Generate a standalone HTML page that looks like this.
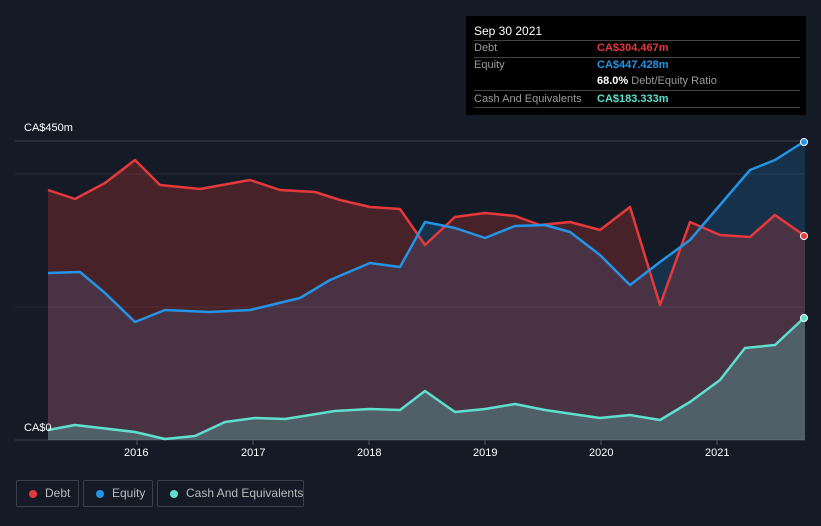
<!DOCTYPE html>
<html><head><style>
body{margin:0;width:821px;height:526px;background:#151b26;font-family:"Liberation Sans",sans-serif;overflow:hidden;position:relative}
.tt{position:absolute;left:466px;top:16px;width:340px;height:99px;background:#000;color:#fff;font-size:11px}
.row{position:absolute;left:8px;width:326px;border-top:1px solid #444}
.lab{position:absolute;left:8px;color:#999}
.val{position:absolute;left:131px;font-weight:bold;white-space:nowrap}
.lg{position:absolute;top:480px;height:27px;border:1px solid #3a404c;border-radius:2px;color:#bbb;font-size:12px;line-height:25px;box-sizing:border-box;white-space:nowrap}
.dot{position:absolute;left:12px;top:9px;width:8px;height:8px;border-radius:50%}
.ax{position:absolute;color:#fff;font-size:11px}
</style></head><body>
<svg width="821" height="526" style="position:absolute;left:0;top:0">
<line x1="15" y1="141" x2="805" y2="141" stroke="#3a404c"/>
<line x1="15" y1="174" x2="805" y2="174" stroke="#262c38"/>
<line x1="15" y1="307" x2="805" y2="307" stroke="#262c38"/>
<line x1="15" y1="440" x2="805" y2="440" stroke="#3a404c"/>
<line x1="137" y1="440" x2="137" y2="445" stroke="#555"/><line x1="253" y1="440" x2="253" y2="445" stroke="#555"/><line x1="369" y1="440" x2="369" y2="445" stroke="#555"/><line x1="485" y1="440" x2="485" y2="445" stroke="#555"/><line x1="601" y1="440" x2="601" y2="445" stroke="#555"/><line x1="717" y1="440" x2="717" y2="445" stroke="#555"/>
<polygon fill="rgba(33,150,243,0.18)" points="48,440 48,273 80,272 105,293 135,322 165,310 210,312 250,310 300,298 330,280 370,263 400,267 425,222 455,228 485,238 515,226 545,225 570,232 600,255 630,285 660,262 690,240 720,205 750,170 775,160 805,141 805,440"/>
<polygon fill="rgba(229,57,53,0.25)" points="48,440 48,190 75,199 105,183 135,160 160,185 200,189 250,180 280,190 315,192 340,200 370,207 400,209 425,245 455,217 485,213 515,216 540,225 570,222 600,230 630,207 660,305 690,222 720,235 750,237 775,215 805,236 805,440"/>
<polygon fill="rgba(100,230,210,0.25)" points="48,440 48,430 75,425 135,432 165,439 195,436 225,422 255,418 285,419 335,411 370,409 400,410 425,391 455,412 485,409 515,404 545,410 600,418 630,415 660,420 690,402 720,380 745,348 775,345 805,317 805,440"/>
<polyline fill="none" stroke="#e5393c" stroke-width="2.5" stroke-linejoin="round" points="48,190 75,199 105,183 135,160 160,185 200,189 250,180 280,190 315,192 340,200 370,207 400,209 425,245 455,217 485,213 515,216 540,225 570,222 600,230 630,207 660,305 690,222 720,235 750,237 775,215 805,236"/>
<polyline fill="none" stroke="#2394e6" stroke-width="2.5" stroke-linejoin="round" points="48,273 80,272 105,293 135,322 165,310 210,312 250,310 300,298 330,280 370,263 400,267 425,222 455,228 485,238 515,226 545,225 570,232 600,255 630,285 660,262 690,240 720,205 750,170 775,160 805,141"/>
<polyline fill="none" stroke="#5fe0cc" stroke-width="2.5" stroke-linejoin="round" points="48,430 75,425 135,432 165,439 195,436 225,422 255,418 285,419 335,411 370,409 400,410 425,391 455,412 485,409 515,404 545,410 600,418 630,415 660,420 690,402 720,380 745,348 775,345 805,317"/>
<circle cx="804" cy="236" r="3.5" fill="#e5393c" stroke="#fff"/>
<circle cx="804" cy="142" r="3.5" fill="#2394e6" stroke="#fff"/>
<circle cx="804" cy="318" r="3.5" fill="#5fe0cc" stroke="#fff"/>
</svg>
<div class="ax" style="left:24px;top:122px">CA$450m</div>
<div class="ax" style="left:24px;top:422px">CA$0</div>
<div class="ax" style="left:124px;top:447px">2016</div><div class="ax" style="left:241px;top:447px">2017</div><div class="ax" style="left:357px;top:447px">2018</div><div class="ax" style="left:473px;top:447px">2019</div><div class="ax" style="left:589px;top:447px">2020</div><div class="ax" style="left:705px;top:447px">2021</div>
<div class="tt">
<div style="position:absolute;left:8px;top:8px;font-size:12px">Sep 30 2021</div>
<div class="row" style="top:24px"></div>
<div class="lab" style="top:26px">Debt</div><div class="val" style="top:26px;color:#e5393c">CA$304.467m</div>
<div class="row" style="top:41px"></div>
<div class="lab" style="top:43px">Equity</div><div class="val" style="top:43px;color:#2394e6">CA$447.428m</div>
<div class="val" style="top:59px">68.0% <span style="color:#999;font-weight:normal">Debt/Equity Ratio</span></div>
<div class="row" style="top:74px"></div>
<div class="lab" style="top:77px">Cash And Equivalents</div><div class="val" style="top:77px;color:#5fe0cc">CA$183.333m</div>
<div class="row" style="top:91px"></div>
</div>
<div class="lg" style="left:16px;width:63px"><span class="dot" style="background:#e5393c"></span><span style="position:absolute;left:28px">Debt</span></div>
<div class="lg" style="left:83px;width:70px"><span class="dot" style="background:#2394e6"></span><span style="position:absolute;left:28px">Equity</span></div>
<div class="lg" style="left:157px;width:147px"><span class="dot" style="background:#5fe0cc"></span><span style="position:absolute;left:28px">Cash And Equivalents</span></div>
</body></html>
